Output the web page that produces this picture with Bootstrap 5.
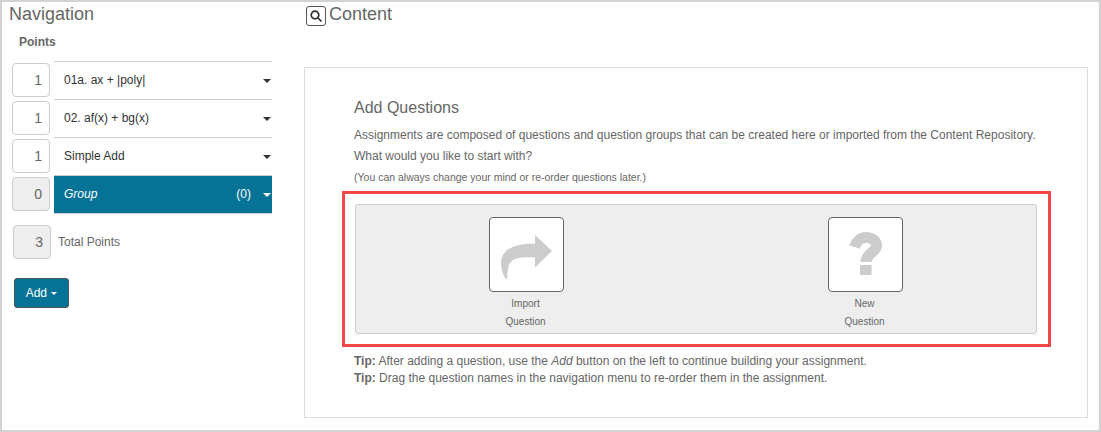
<!DOCTYPE html>
<html lang="en">
<head>
  <meta charset="UTF-8" />
  <meta name="viewport" content="width=device-width, initial-scale=1.0" />
  <title>Add Questions</title>
  <link href="https://cdn.jsdelivr.net/npm/bootstrap@5.3.0/dist/css/bootstrap.min.css" rel="stylesheet" />
  <style>
    body {
      font-family: "Liberation Sans", Arial, sans-serif;
      font-size: 12px;
      color: #666;
      background: #fff;
    }
    .frame {
      width: 1101px;
      height: 432px;
      border: 2px solid #d2d2d2;
      overflow: hidden;
    }
    .side {
      width: 270px;
      padding-left: 7px;
      flex: none;
    }
    .pane-title {
      font-size: 18px;
      line-height: 22px;
      margin: 1px 0 0;
      color: #666;
      font-weight: 400;
    }
    .points-label {
      font-weight: 700;
      margin: 10px 0 0 10px;
      line-height: 14px;
      height: 26px;
    }
    .q-row {
      height: 38px;
      padding-left: 3px;
    }
    .pts-box {
      width: 38px;
      height: 34px;
      margin-top: 2px;
      border: 1px solid #ccc;
      border-radius: 4px;
      padding: 0 7px 0 0;
      background: #fff;
      color: #666;
      font-size: 14px;
      line-height: 32px;
      text-align: right;
      flex: none;
    }
    .pts-off {
      background: #eee;
    }
    .q-name {
      width: 218px;
      margin-left: 4px;
      border-top: 1px solid #ccc;
      padding: 0 1px 0 10px;
      color: #333;
      line-height: 37px;
    }
    .q-last {
      height: 39px;
      border-top-color: #ccc;
      border-bottom: 1px solid #ccc;
    }
    .q-active {
      background: #057396;
      color: #fff;
    }
    .q-active em {
      flex-grow: 1;
    }
    .count {
      margin-right: 12px;
      font-weight: 400;
    }
    .caret-down {
      display: inline-block;
      width: 0;
      height: 0;
      border-top: 4px solid currentColor;
      border-left: 4px solid transparent;
      border-right: 4px solid transparent;
    }
    .total-row {
      margin: 12px 0 0 4px;
    }
    .total-row .pts-box {
      margin-top: 0;
    }
    .total-row span {
      margin-left: 7px;
    }
    .btn-add {
      width: 55px;
      height: 30px;
      margin: 19px 0 0 5px;
      padding: 0;
      font-size: 12px;
      font-weight: 400;
      background: #057396;
      border: 1px solid #555;
      border-radius: 3px;
      color: #fff;
    }
    .btn-add:hover {
      background: #045f7c;
      color: #fff;
    }
    .btn-add .caret-down {
      margin-left: 1px;
      vertical-align: 2px;
      border-top-width: 3px;
      border-left-width: 3.5px;
      border-right-width: 3.5px;
    }
    .main {
      width: 784px;
      margin-left: 32px;
      flex: none;
    }
    .title-line {
      height: 65px;
      gap: 3px;
      padding: 4px 0 0 2px;
    }
    .search-icon {
      width: 20px;
      height: 20px;
      border: 1px solid #555;
      border-radius: 3px;
      margin-top: 0;
      flex: none;
    }
    .title-line .pane-title {
      margin: -3px 0 0;
    }
    .panel-box {
      height: 351px;
      border: 1px solid #ddd;
      padding: 30px 36px 0 37px;
    }
    .intro {
      padding-left: 12px;
    }
    .intro h5 {
      font-size: 16px;
      line-height: 20px;
      font-weight: 400;
      color: #666;
      margin: 0 0 7px;
    }
    .intro p {
      line-height: 21px;
      margin: 0;
    }
    .intro .hint {
      font-size: 10.5px;
      line-height: 19px;
      padding-top: 1px;
    }
    .callout {
      height: 156px;
      margin-top: 4px;
      border: 3px solid #f44747;
      padding: 10px 11px 10px 10px;
    }
    .choice-box {
      height: 130px;
      background: #eee;
      border: 1px solid #ccc;
      border-radius: 3px;
      padding-top: 12px;
    }
    .choice {
      width: 340px;
      text-align: center;
      font-size: 10px;
    }
    .choice + .choice {
      margin-left: -1px;
    }
    .tile {
      display: block;
      width: 75px;
      height: 75px;
      margin: 0 auto 3px;
      background: #fff;
      border: 1px solid #666;
      border-radius: 4px;
    }
    .tile svg {
      display: block;
      margin: -1px;
    }
    .choice div {
      line-height: 18px;
      margin-left: -1px;
    }
    .tips {
      padding: 6px 0 0 12px;
      line-height: 17px;
    }
  </style>
</head>
<body class="m-0">
  <div class="frame d-flex">
    <!-- Navigation -->
    <div class="side">
      <h4 class="pane-title">Navigation</h4>
      <div class="points-label">Points</div>

      <div class="q-row d-flex">
        <div class="pts-box">1</div>
        <div class="q-name d-flex align-items-center justify-content-between">01a. ax + |poly| <i class="caret-down"></i></div>
      </div>
      <div class="q-row d-flex">
        <div class="pts-box">1</div>
        <div class="q-name d-flex align-items-center justify-content-between">02. af(x) + bg(x) <i class="caret-down"></i></div>
      </div>
      <div class="q-row d-flex">
        <div class="pts-box">1</div>
        <div class="q-name d-flex align-items-center justify-content-between">Simple Add <i class="caret-down"></i></div>
      </div>
      <div class="q-row d-flex">
        <div class="pts-box pts-off">0</div>
        <div class="q-name q-last q-active d-flex align-items-center"><em>Group</em><span class="count">(0)</span><i class="caret-down"></i></div>
      </div>

      <div class="total-row d-flex align-items-center">
        <div class="pts-box pts-off">3</div>
        <span>Total Points</span>
      </div>

      <button type="button" class="btn btn-add d-block">Add <i class="caret-down"></i></button>
    </div>

    <!-- Content -->
    <div class="main">
      <div class="title-line d-flex">
        <span class="search-icon d-flex align-items-center justify-content-center">
          <svg width="12" height="12" viewBox="0 0 12 12" fill="none" stroke="#333" stroke-width="1.7" stroke-linecap="round">
            <circle cx="5" cy="5" r="3.8" />
            <path d="M8 8l3 3" />
          </svg>
        </span>
        <h4 class="pane-title">Content</h4>
      </div>

      <div class="panel-box">
        <div class="intro">
          <h5>Add Questions</h5>
          <p>Assignments are composed of questions and question groups that can be created here or imported from the Content Repository.</p>
          <p>What would you like to start with?</p>
          <p class="hint">(You can always change your mind or re-order questions later.)</p>
        </div>

        <div class="callout">
          <div class="choice-box d-flex">
            <div class="choice">
              <span class="tile">
                <svg width="75" height="75" viewBox="0 0 75 75">
                  <path fill="#ccc" d="M46 18L63 34L46 50.5V40.5C31 39.5 21 41 19.5 50C18.5 55 18 58 18.5 61Q17.5 63 16 61C13 55 12 50 12 46C12 33 24 26.3 46 26.7Z" />
                </svg>
              </span>
              <div>Import</div>
              <div>Question</div>
            </div>
            <div class="choice">
              <span class="tile">
                <svg width="75" height="75" viewBox="0 0 75 75">
                  <path fill="none" stroke="#ccc" stroke-width="11" stroke-linejoin="round" d="M26.5 30C28.5 24 33 20.5 38 20.5C44 20.5 48.5 24 48.5 29C48.5 35 38 36 38 45" />
                  <rect x="32" y="48" width="11.5" height="10" rx="1" fill="#ccc" />
                </svg>
              </span>
              <div>New</div>
              <div>Question</div>
            </div>
          </div>
        </div>

        <div class="tips">
          <div><strong>Tip:</strong> After adding a question, use the <em>Add</em> button on the left to continue building your assignment.</div>
          <div><strong>Tip:</strong> Drag the question names in the navigation menu to re-order them in the assignment.</div>
        </div>
      </div>
    </div>
  </div>
  <script src="https://cdn.jsdelivr.net/npm/bootstrap@5.3.0/dist/js/bootstrap.bundle.min.js"></script>
</body>
</html>
